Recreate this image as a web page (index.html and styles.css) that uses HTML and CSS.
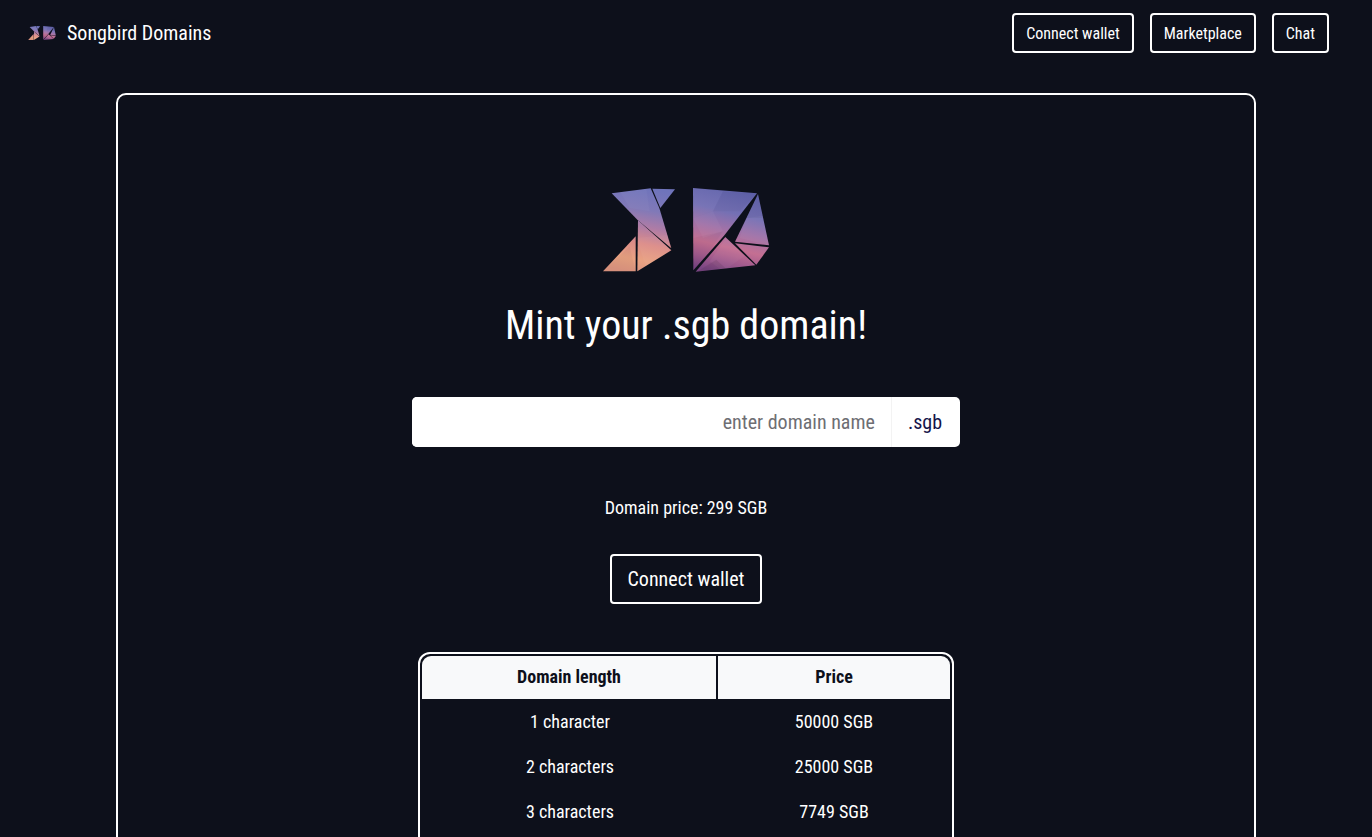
FILE: index.html
```html
<!DOCTYPE html>
<html>
<head>
<meta charset="utf-8">
<meta name="viewport" content="width=device-width, initial-scale=1">
<title>Songbird Domains</title>
<link rel="stylesheet" href="styles.css">
</head>
<body>
	<svg class="defs" width="0" height="0" aria-hidden="true">
		<defs>
			<linearGradient id="grad-s" gradientUnits="userSpaceOnUse" x1="170" y1="40" x2="120" y2="290">
				<stop offset="0" stop-color="#6f74bb"/>
				<stop offset="0.25" stop-color="#8079b8"/>
				<stop offset="0.45" stop-color="#ae7ca6"/>
				<stop offset="0.65" stop-color="#dc8c88"/>
				<stop offset="0.85" stop-color="#e9a282"/>
				<stop offset="1" stop-color="#dd9580"/>
			</linearGradient>
			<linearGradient id="grad-d" gradientUnits="userSpaceOnUse" x1="450" y1="40" x2="390" y2="292">
				<stop offset="0" stop-color="#5f62ab"/>
				<stop offset="0.3" stop-color="#7470b4"/>
				<stop offset="0.5" stop-color="#a072a8"/>
				<stop offset="0.7" stop-color="#c46f92"/>
				<stop offset="0.85" stop-color="#a45c8e"/>
				<stop offset="1" stop-color="#7b4684"/>
			</linearGradient>
			<clipPath id="logo-clip">
				<path d="M66 56 183 41 209 100 245 221 143 135Z"/>
				<path d="M188 42 256 44 212 100Z"/>
				<path d="M145 137 245 227 143 290Z"/>
				<path d="M138 185V290H40Z"/>
				<path d="M310 40 502 56 403 183 311 287Z"/>
				<path d="M407 187 497 272 318 291Z"/>
				<path d="M505 58 538 212 436 201Z"/>
				<path d="M436 206 538 218 500 270Z"/>
			</clipPath>
			<symbol id="logo" viewBox="40 40 498 252">
				<path fill="url(#grad-s)" d="M66 56 183 41 209 100 245 221 143 135Z"/>
				<path fill="url(#grad-s)" d="M188 42 256 44 212 100Z"/>
				<path fill="url(#grad-s)" d="M145 137 245 227 143 290Z"/>
				<path fill="url(#grad-s)" d="M138 185V290H40Z"/>
				<path fill="url(#grad-d)" d="M310 40 502 56 403 183 311 287Z"/>
				<path fill="url(#grad-d)" d="M407 187 497 272 318 291Z"/>
				<path fill="url(#grad-d)" d="M505 58 538 212 436 201Z"/>
				<path fill="url(#grad-d)" d="M436 206 538 218 500 270Z"/>
				<g clip-path="url(#logo-clip)">
					<path fill="#fff" opacity=".03" d="M90 50 170 40 180 110 120 100Z"/>
					<path fill="#fff" opacity=".04" d="M140 190 235 180 240 240 170 280Z"/>
					<path fill="#000" opacity=".03" d="M40 290 120 215 138 290Z"/>
					<path fill="#fff" opacity=".03" d="M310 40 400 50 370 110 310 130Z"/>
					<path fill="#000" opacity=".03" d="M400 50 502 56 450 110 370 110Z"/>
					<path fill="#fff" opacity=".04" d="M310 130 370 110 400 170 340 190Z"/>
					<path fill="#000" opacity=".03" d="M310 190 400 170 340 260 310 290Z"/>
					<path fill="#fff" opacity=".04" d="M410 190 470 240 400 290 360 260Z"/>
					<path fill="#000" opacity=".08" d="M320 292 380 255 420 292Z"/>
					<path fill="#fff" opacity=".04" d="M470 130 538 120 538 212 450 190Z"/>
					<path fill="#000" opacity=".04" d="M505 58 530 130 470 130Z"/>
				</g>
			</symbol>
		</defs>
	</svg>

	<nav class="navbar">
		<a class="brand" href="#">
			<svg class="brand-logo"><use href="#logo"/></svg>
			<span>Songbird Domains</span>
		</a>
		<div class="nav-buttons">
			<button class="btn">Connect wallet</button>
			<button class="btn">Marketplace</button>
			<button class="btn">Chat</button>
		</div>
	</nav>

	<main class="card">
		<svg class="hero-logo"><use href="#logo"/></svg>
		<h1>Mint your .sgb domain!</h1>

		<div class="domain-input">
			<input type="text" placeholder="enter domain name">
			<span class="suffix">.sgb</span>
		</div>

		<p class="price">Domain price: 299 SGB</p>

		<button class="btn btn-lg">Connect wallet</button>

		<div class="table-wrap">
			<table>
				<thead>
					<tr><th class="col-length">Domain length</th><th>Price</th></tr>
				</thead>
				<tbody>
					<tr><td>1 character</td><td>50000 SGB</td></tr>
					<tr><td>2 characters</td><td>25000 SGB</td></tr>
					<tr><td>3 characters</td><td>7749 SGB</td></tr>
				</tbody>
			</table>
		</div>
	</main>
</body>
</html>
```

FILE: styles.css
```css
* {
	box-sizing: border-box;
}
body {
	margin: 0;
	background: #0d101b;
	color: #fff;
	font-family: "Roboto Condensed", Roboto, sans-serif;
	font-stretch: 75%;
	font-size: 16px;
}
.defs {
	position: absolute;
}
.navbar {
	display: flex;
	justify-content: space-between;
	align-items: flex-start;
	padding: 13px 43px 0 28px;
	height: 93px;
}
.brand {
	display: flex;
	align-items: center;
	gap: 11px;
	height: 40px;
	color: #fff;
	font-size: 20px;
	text-decoration: none;
}
.brand-logo {
	width: 28px;
	height: 14px;
	filter: blur(.4px);
}
.nav-buttons {
	display: flex;
	gap: 16px;
}
.btn {
	height: 40px;
	padding: 0 12px;
	background: none;
	border: 2px solid #fff;
	border-radius: 4px;
	color: #fff;
	font: inherit;
	font-stretch: 75%;
	cursor: pointer;
}
.btn-lg {
	display: block;
	height: 50px;
	margin: 0 auto;
	padding: 0 16px;
	font-size: 20px;
}
.card {
	width: 1140px;
	margin: 0 auto 40px;
	padding: 93px 0 60px;
	border: 2px solid #fff;
	border-radius: 10px;
	text-align: center;
}
.hero-logo {
	display: block;
	width: 166px;
	height: 84px;
	margin: 0 auto;
}
h1 {
	margin: 30px 0 47px;
	font-size: 40px;
	line-height: 48px;
	font-weight: 400;
}
.domain-input {
	display: flex;
	width: 548px;
	height: 50px;
	margin: 0 auto;
	background: #fff;
	border-radius: 5px;
	overflow: hidden;
}
.domain-input input {
	flex: 1;
	min-width: 0;
	padding: 0 16px;
	border: 0;
	outline: none;
	text-align: right;
	font: inherit;
	font-stretch: 75%;
	font-size: 20px;
}
.domain-input input::placeholder {
	color: #6e6e73;
}
.suffix {
	display: flex;
	align-items: center;
	padding: 0 18px 0 16px;
	border-left: 1px solid #f3f3f3;
	color: #14144a;
	font-size: 20px;
}
.price {
	margin: 49px 0 34px;
	line-height: 24px;
	font-size: 18px;
}
.table-wrap {
	width: 536px;
	margin: 48px auto 0;
	padding: 2px 2px 40px;
	border: 2px solid #fff;
	border-radius: 12px;
}
table {
	width: 100%;
	border-collapse: separate;
	border-spacing: 0;
	font-size: 18px;
}
th {
	height: 43px;
	padding: 0 0 3px;
	background: #f8f9fa;
	color: #0d101b;
	font-weight: 700;
}
th:first-child {
	border-top-left-radius: 9px;
}
th:last-child {
	border-top-right-radius: 9px;
}
.col-length {
	width: 296px;
	border-right: 2px solid #0d101b;
}
td {
	height: 45px;
}
```
